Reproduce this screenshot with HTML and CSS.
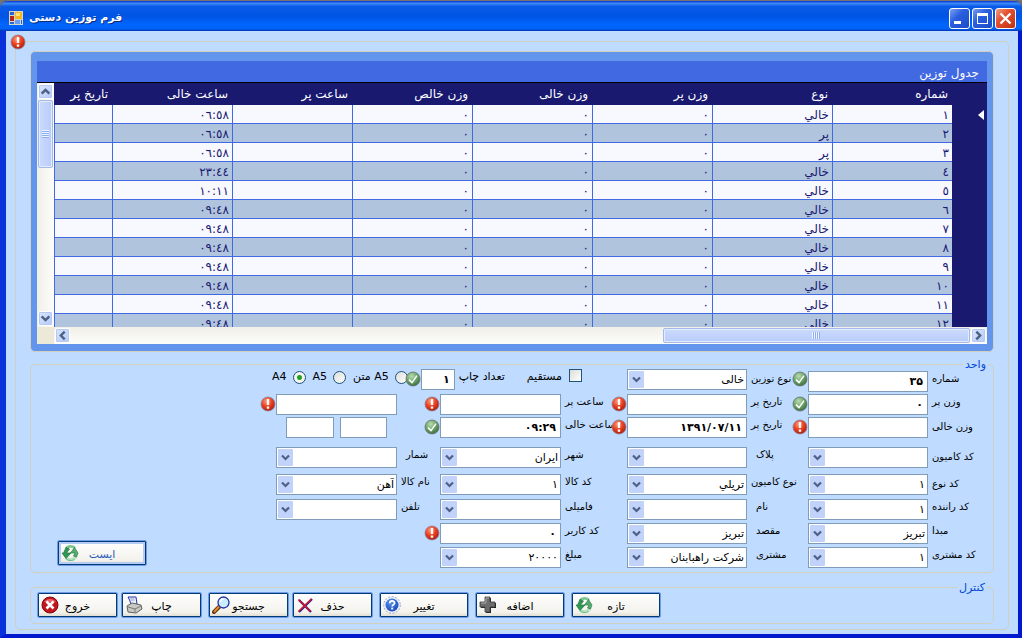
FILE: index.html
```html
<!DOCTYPE html>
<html lang="fa">
<head>
<meta charset="utf-8">
<title>فرم توزین دستی</title>
<link rel="stylesheet" href="styles.css">
</head>
<body>
<svg class="defs" aria-hidden="true">
  <defs>
    <radialGradient id="red" cx="40%" cy="30%" r="75%"><stop offset="0" stop-color="#ff9a7c"/><stop offset=".5" stop-color="#ea4020"/><stop offset="1" stop-color="#a81808"/></radialGradient>
    <radialGradient id="green" cx="40%" cy="30%" r="75%"><stop offset="0" stop-color="#b9dcb4"/><stop offset=".6" stop-color="#629c5e"/><stop offset="1" stop-color="#3c6640"/></radialGradient>
    <radialGradient id="blue" cx="40%" cy="30%" r="75%"><stop offset="0" stop-color="#5d96f0"/><stop offset="1" stop-color="#1646b4"/></radialGradient>
  </defs>
  <symbol id="i-error" viewBox="0 0 16 16"><circle cx="8" cy="8" r="7" fill="url(#red)" stroke="#8d7f95" stroke-width=".8"/><path d="M6.8 3h2.4v6H6.8zM6.8 10.4h2.4v2.3H6.8z" fill="#fff"/></symbol>
  <symbol id="i-ok" viewBox="0 0 16 16"><circle cx="8" cy="8" r="7" fill="url(#green)" stroke="#64706c" stroke-width=".8"/><path d="M4 8.6l3 3 5-7" fill="none" stroke="#fff" stroke-width="1.5"/></symbol>
  <symbol id="i-refresh" viewBox="0 0 18 18"><path d="M5 4.500C7 2 11 1.500 14 4" fill="none" stroke="#7cc690" stroke-width="2.600"/><path d="M5 14c3 3 8 2 10-2" fill="none" stroke="#b4e2c0" stroke-width="3"/><path d="M5 14.500c2 2.500 6 2.500 8.500 1" fill="none" stroke="#5fae78" stroke-width=".8"/><path d="M5 3.500L8.500 5 5.500 9H10l-5 5.500L1 9h1.500z" fill="#2f9a54" stroke="#176434" stroke-width=".6"/><path d="M13.500 3.500L17 9l-1.500 4-3-1 1.500-3H9.500z" fill="#55ae70" stroke="#1f6e3c" stroke-width=".6"/></symbol>
  <symbol id="i-exit" viewBox="0 0 18 18"><circle cx="9" cy="9" r="8" fill="#c4141c" stroke="#7c0a10"/><path d="M3 6a7 6 0 0 1 12 0" fill="#e8646a"/><path d="M5.500 5.500l7 7M12.500 5.500l-7 7" stroke="#fff" stroke-width="2.600"/></symbol>
  <symbol id="i-print" viewBox="0 0 18 18"><path d="M3 1h8l1 7-6 1-1-4z" fill="#e8f0ff" stroke="#2634b4"/><path d="M2 10l5-3 9 2 1 4-6 4-8-1z" fill="#c9c9c5" stroke="#62625f"/><path d="M3 11l7 2 6-3M10 13v3" stroke="#787874" fill="none"/><path d="M5 2h4M5.500 4h4" stroke="#88a" stroke-width=".8"/></symbol>
  <symbol id="i-search" viewBox="0 0 18 18"><path d="M8 10l-6 6" stroke="#5d3511" stroke-width="4" stroke-linecap="round"/><path d="M7.500 10l-5 5.500" stroke="#dc8a30" stroke-width="2" stroke-linecap="round"/><circle cx="11.500" cy="6.500" r="5.500" fill="#c9ecff" stroke="#2432a4" stroke-width="1.300"/><path d="M8.500 6a3 3 0 0 1 3-3" stroke="#fff" stroke-width="1.400" fill="none"/></symbol>
  <symbol id="i-delete" viewBox="0 0 18 18"><path d="M3 4l12 12M16 3L3 16" stroke="#23239b" stroke-width="2.400" fill="none"/><path d="M2.500 3.500l12 12M15.500 3L2.500 15.500" stroke="#d1162c" stroke-width="1.600" fill="none"/></symbol>
  <symbol id="i-help" viewBox="0 0 18 18"><circle cx="9" cy="9" r="8.300" fill="#e9f1ff" stroke="#8793b8" stroke-width=".8" stroke-dasharray="2 1.500"/><circle cx="9" cy="9" r="6.500" fill="url(#blue)"/><path d="M6.700 7.300c0-3.200 4.900-3 4.900-.3 0 1.700-2.400 1.700-2.400 3.400" fill="none" stroke="#fff" stroke-width="1.700"/><path d="M8.200 11.600h2v1.900h-2z" fill="#fff"/></symbol>
  <symbol id="i-plus" viewBox="0 0 18 18"><path d="M7 2h5v5h5v5h-5v5H7v-5H2V7h5z" fill="#222" /><path d="M6 1h5v5h5v5h-5v5H6v-5H1V6h5z" fill="#6d6d6d" stroke="#3d3d3d" stroke-width=".8"/><path d="M7 2h3M2 7h5V2" fill="none" stroke="#aaa"/></symbol>
  <symbol id="i-chev" viewBox="0 0 10 10"><path d="M1.500 3L5 6.500 8.500 3" fill="none" stroke="#4d6185" stroke-width="2.200"/></symbol>
</svg>

<main class="window">
  <header class="titlebar">
    <svg class="appicon" viewBox="0 0 14 14"><rect width="14" height="14" fill="#d9d5c5"/><rect x="1" y="1" width="4" height="3" fill="#2b62d9"/><rect x="6" y="1" width="7" height="7" fill="#f5b81c"/><rect x="7" y="2" width="4" height="3" fill="#ffe37a"/><rect x="1" y="5" width="4" height="5" fill="#b3261c"/><rect x="1" y="11" width="4" height="2" fill="#2b62d9"/><rect x="6" y="9" width="5" height="4" fill="#6c9df0"/><rect x="12" y="9" width="1" height="4" fill="#2b62d9"/></svg>
    <h1 class="title" dir="rtl">فرم توزین دستی</h1>
    <div class="winbtns">
      <button class="winbtn" aria-label="Minimize"><svg viewBox="0 0 19 19"><path d="M4 12h7v3H4z" fill="#fff"/></svg></button>
      <button class="winbtn" aria-label="Maximize"><svg viewBox="0 0 19 19"><path d="M4 4h11v11H4zM5 7v7h9V7z" fill="#fff" fill-rule="evenodd"/></svg></button>
      <button class="winbtn close" aria-label="Close"><svg viewBox="0 0 19 19"><path d="M4.500 4.500l10 10M14.500 4.500l-10 10" stroke="#fff" stroke-width="2.400"/></svg></button>
    </div>
  </header>

  <div class="client">
    <svg class="badge"><use href="#i-error"/></svg>

    <section class="panel">
      <h2 class="caption" dir="rtl">جدول توزین</h2>
      <div class="gridbox">
        <div class="vscroll">
          <button class="sbtn" aria-label="بالا"><svg class="up"><use href="#i-chev"/></svg></button>
          <div class="vthumb"></div>
          <button class="sbtn" aria-label="پایین"><svg><use href="#i-chev"/></svg></button>
        </div>
        <div class="viewport" dir="rtl">
          <table class="data">
            <colgroup><col class="c-head"><col class="c"><col class="c"><col class="c"><col class="c"><col class="c"><col class="c"><col class="c"><col></colgroup>
            <thead><tr><th></th><th>شماره</th><th>نوع</th><th>وزن پر</th><th>وزن خالی</th><th>وزن خالص</th><th>ساعت پر</th><th>ساعت خالی</th><th>تاریخ پر</th></tr></thead>
            <tbody>
              <tr><th><svg class="marker" viewBox="0 0 6 10"><path d="M6 0v10L0 5z" fill="#fff"/></svg></th><td>١</td><td>خالي</td><td>٠</td><td>٠</td><td>٠</td><td></td><td>٠٦:٥٨</td><td></td></tr>
              <tr><th></th><td>٢</td><td>پر</td><td>٠</td><td>٠</td><td>٠</td><td></td><td>٠٦:٥٨</td><td></td></tr>
              <tr><th></th><td>٣</td><td>پر</td><td>٠</td><td>٠</td><td>٠</td><td></td><td>٠٦:٥٨</td><td></td></tr>
              <tr><th></th><td>٤</td><td>خالي</td><td>٠</td><td>٠</td><td>٠</td><td></td><td>٢٣:٤٤</td><td></td></tr>
              <tr><th></th><td>٥</td><td>خالي</td><td>٠</td><td>٠</td><td>٠</td><td></td><td>١٠:١١</td><td></td></tr>
              <tr><th></th><td>٦</td><td>خالي</td><td>٠</td><td>٠</td><td>٠</td><td></td><td>٠٩:٤٨</td><td></td></tr>
              <tr><th></th><td>٧</td><td>خالي</td><td>٠</td><td>٠</td><td>٠</td><td></td><td>٠٩:٤٨</td><td></td></tr>
              <tr><th></th><td>٨</td><td>خالي</td><td>٠</td><td>٠</td><td>٠</td><td></td><td>٠٩:٤٨</td><td></td></tr>
              <tr><th></th><td>٩</td><td>خالي</td><td>٠</td><td>٠</td><td>٠</td><td></td><td>٠٩:٤٨</td><td></td></tr>
              <tr><th></th><td>١٠</td><td>خالي</td><td>٠</td><td>٠</td><td>٠</td><td></td><td>٠٩:٤٨</td><td></td></tr>
              <tr><th></th><td>١١</td><td>خالي</td><td>٠</td><td>٠</td><td>٠</td><td></td><td>٠٩:٤٨</td><td></td></tr>
              <tr><th></th><td>١٢</td><td>خالي</td><td>٠</td><td>٠</td><td>٠</td><td></td><td>٠٩:٤٨</td><td></td></tr>
            </tbody>
          </table>
        </div>
        <div class="corner"></div>
        <div class="hscroll">
          <button class="sbtn" aria-label="چپ"><svg class="left"><use href="#i-chev"/></svg></button>
          <div class="hthumb"></div>
          <button class="sbtn" aria-label="راست"><svg class="right"><use href="#i-chev"/></svg></button>
        </div>
      </div>
    </section>

    <fieldset class="group unit" dir="rtl">
      <legend>واحد</legend>
      <div class="form">
        <label class="r1 la low" for="num">شماره</label><input class="r1 fa low" id="num" value="۳۵"><svg class="r1 ib ic low"><use href="#i-ok"/></svg>
        <label class="r1 lb low" for="wtype">نوع توزین</label><select class="r1 fb" id="wtype"><option>خالی</option></select>
        <div class="options">
          <input type="checkbox" class="check" id="direct"><label class="directlabel" for="direct">مستقیم</label>
          <label class="copylabel" for="copies">تعداد چاپ</label><input class="copies" id="copies" value="۱">
          <svg class="ic okicon"><use href="#i-ok"/></svg>
          <input type="radio" name="paper" class="radio first" id="p1"><label class="p1label" for="p1">A5 متن</label>
          <input type="radio" name="paper" class="radio" id="p2"><label class="plabel" for="p2">A5</label>
          <input type="radio" name="paper" class="radio" id="p3" checked><label class="plabel" for="p3">A4</label>
        </div>

        <label class="r2 la" for="wfull">وزن پر</label><input class="r2 fa" id="wfull" value="۰"><svg class="r2 ib ic"><use href="#i-ok"/></svg>
        <label class="r2 lb" for="dfull">تاریخ پر</label><input class="r2 fb" id="dfull"><svg class="r2 icc ic"><use href="#i-error"/></svg>
        <label class="r2 lc" for="tfull">ساعت پر</label><input class="r2 fc" id="tfull"><svg class="r2 id ic"><use href="#i-error"/></svg>
        <input class="r2 fd" aria-label="پلاک کامل"><svg class="r2 ie ic"><use href="#i-error"/></svg>

        <label class="r3 la low" for="wempty">وزن خالی</label><input class="r3 fa" id="wempty"><svg class="r3 ib ic"><use href="#i-error"/></svg>
        <label class="r3 lb" for="dempty">تاریخ پر</label><input class="r3 fb" id="dempty" value="۱۳۹۱/۰۷/۱۱"><svg class="r3 icc ic"><use href="#i-error"/></svg>
        <label class="r3 lc" for="tempty">ساعت خالی</label><input class="r3 fc" id="tempty" value="۰۹:۲۹"><svg class="r3 id ic"><use href="#i-ok"/></svg>
        <div class="r3 fd pair"><input aria-label="بخش ۱"><input aria-label="بخش ۲"></div>

        <label class="r4 la low" for="truck">کد کامیون</label><select class="r4 fa" id="truck"><option></option></select>
        <label class="r4 lb in" for="plate">پلاک</label><select class="r4 fb" id="plate"><option></option></select>
        <label class="r4 lc" for="city">شهر</label><select class="r4 fc" id="city"><option>ایران</option></select>
        <label class="r4 ld in" for="count">شمار</label><select class="r4 fd" id="count"><option></option></select>

        <label class="r5 la low" for="kind">کد نوع</label><select class="r5 fa" id="kind"><option>۱</option></select>
        <label class="r5 lb" for="tkind">نوع کامیون</label><select class="r5 fb" id="tkind"><option>تريلي</option></select>
        <label class="r5 lc" for="goods">کد کالا</label><select class="r5 fc" id="goods"><option>۱</option></select>
        <label class="r5 ld" for="gname">نام کالا</label><select class="r5 fd" id="gname"><option>آهن</option></select>

        <label class="r6 la" for="driver">کد راننده</label><select class="r6 fa" id="driver"><option>۱</option></select>
        <label class="r6 lb in" for="name">نام</label><select class="r6 fb" id="name"><option></option></select>
        <label class="r6 lc" for="family">فامیلی</label><select class="r6 fc" id="family"><option></option></select>
        <label class="r6 ld" for="tel">تلفن</label><select class="r6 fd" id="tel"><option></option></select>

        <label class="r7 la" for="from">مبدا</label><select class="r7 fa" id="from"><option>تبریز</option></select>
        <label class="r7 lb in" for="to">مقصد</label><select class="r7 fb" id="to"><option>تبریز</option></select>
        <label class="r7 lc" for="user">کد کاربر</label><input class="r7 fc" id="user" value="۰"><svg class="r7 id ic"><use href="#i-error"/></svg>

        <label class="r8 la" for="ccode">کد مشتری</label><select class="r8 fa" id="ccode"><option>۱</option></select>
        <label class="r8 lb in" for="customer">مشتری</label><select class="r8 fb" id="customer"><option>شرکت راهبابنان</option></select>
        <label class="r8 lc" for="price">مبلغ</label><select class="r8 fc" id="price"><option>٢٠٠٠٠</option></select>

        <button class="btn wide focus stop"><span>ایست</span><svg><use href="#i-refresh"/></svg></button>
      </div>
    </fieldset>

    <fieldset class="group control" dir="rtl">
      <legend>کنترل</legend>
      <div class="toolbar">
        <div class="duo">
          <button class="btn"><span>خروج</span><svg><use href="#i-exit"/></svg></button>
          <button class="btn"><span>چاپ</span><svg><use href="#i-print"/></svg></button>
        </div>
        <div class="duo">
          <button class="btn"><span>جستجو</span><svg><use href="#i-search"/></svg></button>
          <button class="btn"><span>حذف</span><svg><use href="#i-delete"/></svg></button>
        </div>
        <button class="btn wide"><span>تغییر</span><svg><use href="#i-help"/></svg></button>
        <button class="btn wide"><span>اضافه</span><svg><use href="#i-plus"/></svg></button>
        <button class="btn wide"><span>تازه</span><svg><use href="#i-refresh"/></svg></button>
      </div>
    </fieldset>
  </div>
</main>
</body>
</html>
```

FILE: styles.css
```css
* { box-sizing: border-box; }
body {
  margin: 0;
  background: #77756b;
  font-family: "DejaVu Sans", Tahoma, sans-serif;
  font-size: 11px;
  color: #000;
}
button, input, select { font: inherit; color: inherit; margin: 0; }
.defs { position: absolute; width: 0; height: 0; }

.window {
  min-height: 100vh;
  background: #bfdbff;
  border: solid;
  border-width: 0 4px 4px 6px;
  border-color: #0019cf #0019cf #0019cf #0831d9;
  border-radius: 8px 8px 0 0;
}
.titlebar {
  display: flex;
  align-items: center;
  height: 31px;
  margin: 0 -4px 0 -6px;
  padding: 4px 6px 0 9px;
  border-top: 1px solid #77756b;
  border-radius: 8px 8px 0 0;
  background: linear-gradient(#0831d9 0, #3b8cf5 8%, #0a5be8 18%, #0054e3 50%, #0066ff 80%, #0062f8 92%, #0038b8 100%);
}
.appicon { width: 14px; height: 14px; }
.title {
  margin: 0 0 0 6px;
  flex: 1;
  text-align: left;
  font-size: 11px;
  line-height: 20px;
  color: #fff;
  text-shadow: 1px 1px 0 #0a2a80;
}
.winbtns { display: flex; gap: 2px; }
.winbtn {
  width: 21px;
  height: 21px;
  padding: 0;
  border: 1px solid #fff;
  border-radius: 3px;
  background: linear-gradient(135deg, #7c9ff0, #2b5fdf 40%, #1c4bc8);
}
.winbtn svg { display: block; width: 19px; height: 19px; }
.winbtn.close { background: linear-gradient(135deg, #f0a080, #e25030 40%, #c03010); }

.client {
  position: relative;
  margin: 10px 9px 4px;
  padding: 9px 14px 5px;
  border: 1px solid #d0d0bf;
  border-radius: 5px;
}
.badge { position: absolute; left: -6px; top: -8px; width: 16px; height: 16px; }

.panel {
  padding: 9px 6px 7px;
  background: #6495ed;
  border: 1px solid #d0d0bf;
  border-radius: 5px;
}
.caption {
  margin: 0;
  padding: 0 8px;
  height: 22px;
  line-height: 24px;
  font-size: 12px;
  font-weight: normal;
  color: #fff;
  background: #4169e1;
  border-bottom: 1px solid #000;
}
.gridbox { display: grid; grid-template-columns: 17px 1fr; grid-template-rows: 244px 17px; }
.viewport { overflow: hidden; background: #191970; }
.data { width: 100%; table-layout: fixed; border-spacing: 0; color: #191970; font-size: 12px; }
.c-head { width: 35px; }
.c { width: 120px; }
.data th, .data td {
  padding: 2px 3px 0;
  height: 19px;
  line-height: 16px;
  text-align: right;
  font-weight: normal;
  white-space: nowrap;
}
.data td { background: #f8f8ff; border: solid #4169e1; border-width: 0 0 1px 1px; }
.data tr:nth-child(even) td { background: #b0c4de; }
.data th { background: #191970; color: #fff; }
.data thead th { height: 22px; line-height: 20px; padding: 0 4px; }
.data tbody th { padding-top: 0; }
.marker { display: block; width: 6px; height: 10px; }

.vscroll {
  display: flex;
  flex-direction: column;
  align-items: center;
  padding: 1px 0;
  gap: 1px;
  background: linear-gradient(90deg, #f0efe8, #fdfdfa);
}
.hscroll {
  display: flex;
  align-items: center;
  padding: 0 1px;
  gap: 1px;
  background: linear-gradient(#f0efe8, #fdfdfa);
}
.corner { background: #ece9d8; }
.sbtn {
  display: grid;
  place-items: center;
  flex: none;
  width: 15px;
  height: 15px;
  padding: 0;
  border: 1px solid #fff;
  border-radius: 2px;
  background: linear-gradient(135deg, #dce7fe, #b3c9f8);
  box-shadow: inset 0 0 0 1px #b6c9f4;
}
.sbtn svg { width: 11px; height: 11px; }
.up { transform: rotate(180deg); }
.left { transform: rotate(90deg); }
.right { transform: rotate(-90deg); }
.vthumb, .hthumb { border: 1px solid #a3b9ee; border-radius: 2px; box-shadow: inset 0 0 0 1px #e4edff; }
.vthumb {
  width: 15px;
  height: 68px;
  margin-bottom: auto;
  background: repeating-linear-gradient(#eef4ff 0 1px, #8cb0f8 1px 2px) center / 7px 8px no-repeat, linear-gradient(90deg, #cbdafd, #b9ccfb);
}
.hthumb {
  width: 33%;
  height: 15px;
  margin-left: auto;
  background: repeating-linear-gradient(90deg, #eef4ff 0 1px, #8cb0f8 1px 2px) center / 8px 7px no-repeat, linear-gradient(#cbdafd, #b9ccfb);
}

.group { margin: 7px 0 0; padding: 0 5px 4px; border: 1px solid #d0d0bf; border-radius: 5px; min-width: 0; }
.group legend { padding: 2px 2px 0; line-height: 8px; font-size: 11px; color: #0046d5; }
.control { margin-top: 9px; padding: 0 6px 5px; }

.form {
  display: grid;
  grid-template-columns: 60px 120px 16px 45px 120px 16px 50px 121px 16px 27px 121px 16px 1fr;
  grid-template-rows: 25px 23px 30px 27px 25px 24px 24px 21px;
  align-items: start;
}
.r1 { grid-row: 1; } .r2 { grid-row: 2; } .r3 { grid-row: 3; } .r4 { grid-row: 4; }
.r5 { grid-row: 5; } .r6 { grid-row: 6; } .r7 { grid-row: 7; } .r8 { grid-row: 8; }
.la { grid-column: 1; } .fa { grid-column: 2; } .ib { grid-column: 3; }
.lb { grid-column: 4; } .fb { grid-column: 5; } .icc { grid-column: 6; }
.lc { grid-column: 7; } .fc { grid-column: 8; } .id { grid-column: 9; }
.ld { grid-column: 10; } .fd { grid-column: 11; } .ie { grid-column: 12; }
.form label { line-height: 16px; white-space: nowrap; font-size: 10px; }
.form .options label { font-size: 11px; }
.form > label { justify-self: end; padding-left: 4px; }
.form > label.in { padding-left: 9px; }
.form > .low { margin-top: 2px; }
.ic { width: 16px; height: 16px; margin-top: 2px; z-index: 1; }
.form input:not([type]), .form select {
  width: 100%;
  height: 21px;
  padding: 0 4px;
  border: 1px solid #7f9db9;
  border-radius: 0;
  background-color: #fff;
  font-size: 11px;
}
.form input:not([type]) { font-weight: bold; }
.form select {
  appearance: none;
  padding: 0 2px 0 18px;
  background-image: url("data:image/svg+xml,%3Csvg xmlns='http://www.w3.org/2000/svg' width='15' height='17'%3E%3Crect width='15' height='17' rx='1' fill='%23c1d3fb'/%3E%3Cpath d='M4 6.500l3.500 3.500L11 6.500' fill='none' stroke='%234d6185' stroke-width='2.200'/%3E%3C/svg%3E");
  background-repeat: no-repeat;
  background-position: 1px 1px;
}
.form .pair { display: flex; gap: 6px; padding: 0 10px; }
.form .pair input { flex: 1; min-width: 0; }

.options { grid-row: 1; grid-column: 6 / -1; display: flex; align-items: flex-start; padding-right: 45px; }
.check { flex: none; width: 13px; height: 13px; appearance: none; background: linear-gradient(135deg, #dcdcd7, #fff); border: 1px solid #1c5180; }
.directlabel { margin-right: 7px; }
.copylabel { margin-right: 22px; }
.form .options .copies { width: 34px; margin-right: 4px; flex: none; }
.okicon { margin-right: 0; flex: none; }
.radio {
  appearance: none;
  flex: none;
  width: 13px;
  height: 13px;
  margin-top: 2px;
  margin-right: 7px;
  border: 1px solid #1c5180;
  border-radius: 50%;
  background: linear-gradient(135deg, #dcdcd7, #fff);
}
.radio.first { margin-right: -3px; }
.radio:checked { background: radial-gradient(circle, #21a121 0 2px, #f4f4f0 3px); }
.p1label, .plabel { margin-right: 6px; }

.toolbar { display: flex; direction: ltr; gap: 6px; }
.duo { display: flex; gap: 3px; }
.btn {
  display: grid;
  direction: ltr;
  grid-template-columns: 18px 1fr 18px;
  align-items: center;
  justify-items: center;
  width: 81px;
  height: 26px;
  padding: 0 3px;
  border: 1px solid #6f9be8;
  border-radius: 2px;
  background: linear-gradient(#fff, #f3f2ec 80%, #dcd8cc);
  box-shadow: inset 0 0 0 1px #003c74;
  font-size: 11px;
}
.btn svg { width: 18px; height: 18px; grid-column: 1; grid-row: 1; }
.btn span { grid-column: 2; grid-row: 1; direction: rtl; white-space: nowrap; padding-top: 2px; }
.wide { width: 90px; }
.focus { color: #2a5cb8; box-shadow: inset 0 0 0 1px #003c74, inset 0 0 0 3px #b3cbf5; }
.stop { grid-column: 13; grid-row: 7 / 9; justify-self: end; margin: 17px 0 0 21px; }
```
